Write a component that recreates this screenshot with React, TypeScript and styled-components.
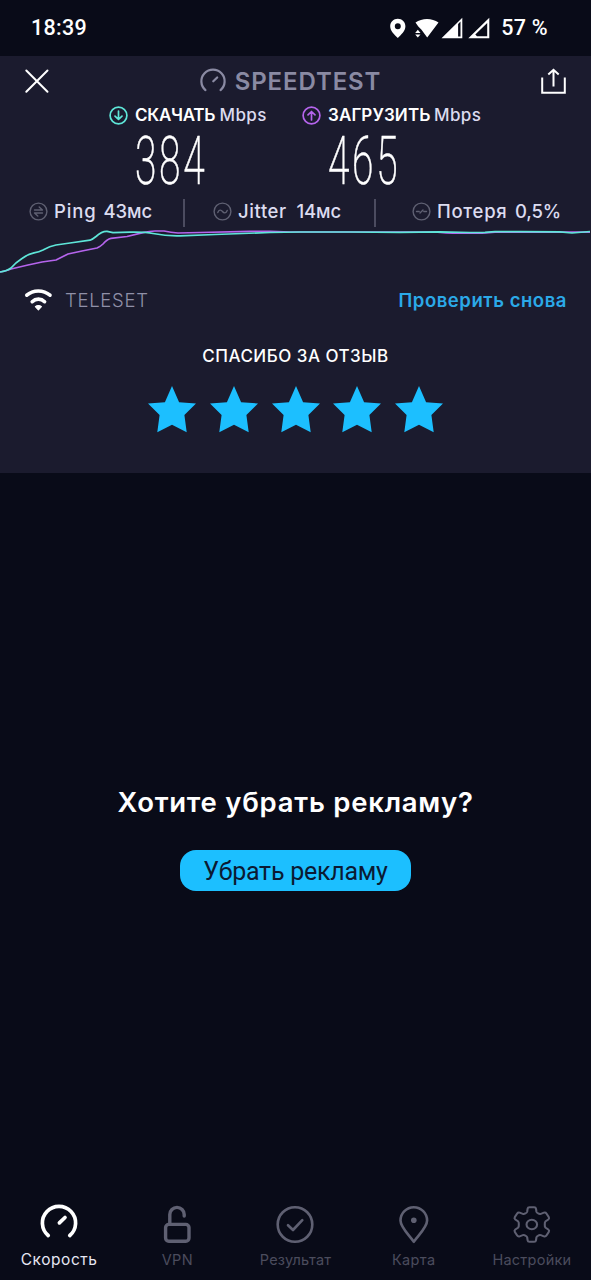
import React from 'react';
import styled, { createGlobalStyle } from 'styled-components';

const Global = createGlobalStyle`
  *, *::before, *::after { box-sizing: border-box; }
  body { margin: 0; background: #090b18; }
`;

const color = {
  page: '#090b18',
  panel: '#1b1b2e',
  white: '#ffffff',
  soft: '#dcdcf0',
  muted: '#8a8aa3',
  dim: '#5f6072',
  label: '#4b4c5d',
  accent: '#1cbfff',
  link: '#2ba9e8',
  download: '#5ee6d8',
  upload: '#b564ec',
};

const Screen = styled.div`
  display: flex;
  flex-direction: column;
  width: 100%;
  height: 1280px;
  background: ${color.page};
  font-family: Inter, 'Noto Sans', sans-serif;
  overflow: hidden;
`;

const Text = styled.span<{ $size: number; $weight?: number; $spacing?: number; $color?: string; $width?: number }>`
  flex: none;
  width: ${(p) => (p.$width ? `${p.$width}px` : 'auto')};
  font-size: ${(p) => p.$size}px;
  font-weight: ${(p) => p.$weight ?? 500};
  letter-spacing: ${(p) => p.$spacing ?? 0}px;
  color: ${(p) => p.$color ?? color.white};
  line-height: 1.2;
  white-space: nowrap;
`;

const StatusBar = styled.div`
  display: flex;
  flex: none;
  align-items: center;
  justify-content: space-between;
  height: 56px;
  padding: 0 43px 0 31px;
  font-family: Roboto, sans-serif;
`;

const StatusIcons = styled.div`
  display: flex;
  align-items: center;
`;

const StatusGlyphs = styled.svg`
  display: block;
  margin-right: 10px;
`;

const ResultPanel = styled.section`
  flex: none;
  height: 417px;
  background: ${color.panel};
`;

const Header = styled.header`
  display: grid;
  grid-template-columns: 150px 1fr 150px;
  align-items: center;
  height: 49px;
  padding: 0 24px;
`;

const Brand = styled.div`
  display: flex;
  align-items: center;
  justify-content: center;
  gap: 8px;
  padding: 3px 11px 0 0;
`;

const IconButton = styled.button<{ $end?: boolean }>`
  display: block;
  justify-self: ${(p) => (p.$end ? 'end' : 'start')};
  padding: 0;
  border: 0;
  background: none;
  line-height: 0;
`;

const Speeds = styled.div`
  display: grid;
  grid-template-columns: 193px 1fr;
  height: 91px;
  padding-left: 109px;
`;

const SpeedLabel = styled.div`
  display: flex;
  align-items: center;
  height: 20px;
  svg { flex: none; margin-right: 7px; }
`;

const SpeedValue = styled.div`
  height: 71px;
  padding-left: 26px;
  font: 200 66px/73px Roboto, sans-serif;
  letter-spacing: 4.5px;
  color: ${color.white};
  -webkit-text-stroke: 0.5px ${color.white};
  span { display: inline-block; transform: scaleX(0.59); transform-origin: left center; }
`;

const Stats = styled.div`
  display: grid;
  grid-template-columns: 184px 191px 1fr;
  height: 30px;
`;

const Stat = styled.div<{ $inset: number; $divided?: boolean }>`
  position: relative;
  display: flex;
  align-items: center;
  padding-left: ${(p) => p.$inset}px;
  svg { flex: none; margin-right: 6px; }
  &::before {
    content: '';
    display: ${(p) => (p.$divided ? 'block' : 'none')};
    position: absolute;
    left: -1px;
    top: 3px;
    width: 2px;
    height: 28px;
    background: #4c4c60;
  }
`;

const Chart = styled.svg`
  display: block;
  width: 100%;
  height: 54px;
`;

const ProviderRow = styled.div`
  display: flex;
  align-items: center;
  height: 41px;
  padding: 0 24px;
  svg { margin-right: 12px; }
`;

const Retry = styled.a`
  margin-left: auto;
  line-height: 0;
`;

const Feedback = styled.div`
  display: flex;
  flex-direction: column;
  align-items: center;
  padding-top: 25px;
`;

const Stars = styled.div`
  display: flex;
  gap: 13.6px;
  margin-top: 20px;
`;

const Promo = styled.main`
  display: flex;
  flex: 1;
  flex-direction: column;
  align-items: center;
  padding-top: 313px;
`;

const PromoButton = styled.button`
  width: 231px;
  height: 41px;
  margin-top: 31px;
  padding: 3px 0 0;
  border: 0;
  border-radius: 16px;
  background: ${color.accent};
  font: 400 25px/38px Roboto, sans-serif;
  letter-spacing: -0.25px;
  color: #0b1a33;
`;

const Nav = styled.nav`
  display: grid;
  flex: none;
  grid-template-columns: repeat(5, 1fr);
  height: 80px;
`;

const NavItem = styled.div`
  display: flex;
  flex-direction: column;
  align-items: center;
  padding-top: 4px;
  gap: 7px;
`;

const Gauge = ({ size, stroke, width }: { size: number; stroke: string; width: number }) => (
  <svg width={size} height={size} viewBox="0 0 40 40" fill="none" stroke={stroke} strokeWidth={width} strokeLinecap="round">
    <path d="M9.200 31.500A16.600 16.600 0 1 1 30.800 31.500" />
    <path d="M20.400 18.900L26 13.500" strokeWidth={width} />
  </svg>
);

const Badge = ({ stroke, children, dark }: { stroke: string; children: React.ReactNode; dark?: boolean }) => (
  <svg width="19" height="19" viewBox="0 0 19 19" fill="none" stroke={stroke} strokeWidth={dark ? 1.4 : 1.7} strokeLinecap="round" strokeLinejoin="round">
    <circle cx="9.5" cy="9.5" r="8.4" />
    {children}
  </svg>
);

const Star = () => (
  <svg width="48" height="47" viewBox="0 0 48 47" fill={color.accent}>
    <path d="M24 0L31.1 16.2L48 17.500L36.400 29L38.700 46.300L24 38.800L9.300 46.300L11.600 29L0 17.500L16.900 16.200Z" />
  </svg>
);

const navStroke = { fill: 'none', stroke: color.dim, strokeLinecap: 'round', strokeLinejoin: 'round' } as const;

const navItems: { name: string; spacing: number; icon: React.ReactNode }[] = [
  { name: 'Скорость', spacing: 0.9, icon: <Gauge size={40} stroke={color.white} width={3.7} /> },
  {
    name: 'VPN',
    spacing: 0.37,
    icon: (
      <svg width="40" height="40" viewBox="0 0 40 40" {...navStroke} strokeWidth="3.4">
        <rect x="8.600" y="20.400" width="23.400" height="16.800" rx="3.200" />
        <path d="M12.800 20V10.600A7.200 7.200 0 0 1 27.200 10.600V12" />
      </svg>
    ),
  },
  {
    name: 'Результат',
    spacing: 0.15,
    icon: (
      <svg width="40" height="40" viewBox="0 0 40 40" {...navStroke} strokeWidth="2.6">
        <circle cx="20" cy="20.500" r="17.300" />
        <path d="M13 21.200L18 26L27.300 16.200" />
      </svg>
    ),
  },
  {
    name: 'Карта',
    spacing: 0.37,
    icon: (
      <svg width="40" height="40" viewBox="0 0 40 40" {...navStroke} strokeWidth="2.6">
        <path d="M19.800 37.800C15 31 6.500 23.500 6.500 16.600A13.300 13.300 0 0 1 33.100 16.600C33.100 23.500 24.600 31 19.800 37.800Z" />
        <circle cx="19.800" cy="16.200" r="2.800" fill={color.dim} stroke="none" />
      </svg>
    ),
  },
  {
    name: 'Настройки',
    spacing: 0.25,
    icon: (
      <svg width="40" height="40" viewBox="0 0 40 40" {...navStroke} strokeWidth="1.900">
        <g transform="translate(-2.200 0) scale(1.100 1)">
          <path d="M16.2 4.6Q16.4 3.2 17.9 3.2H22.1Q23.6 3.2 23.8 4.6L24.2 7.7Q24.6 8.9 25.8 9.4Q27 10.2 28.2 9.8L31 8.7Q32.5 8.2 33.3 9.5L35.4 13Q36.2 14.4 35 15.4L32.6 17.2Q31.6 18.2 31.8 20.5Q31.6 22.8 32.6 23.8L35 25.6Q36.2 26.6 35.4 28L33.3 31.5Q32.5 32.8 31 32.3L28.2 31.2Q27 30.8 25.8 31.6Q24.6 32.1 24.2 33.3L23.8 36.4Q23.6 37.8 22.1 37.8H17.9Q16.4 37.8 16.2 36.4L15.8 33.3Q15.4 32.1 14.2 31.6Q13 30.8 11.8 31.2L9 32.3Q7.5 32.8 6.7 31.5L4.6 28Q3.8 26.6 5 25.6L7.4 23.8Q8.4 22.8 8.2 20.5Q8.4 18.2 7.4 17.2L5 15.4Q3.8 14.4 4.6 13L6.7 9.5Q7.5 8.2 9 8.7L11.8 9.8Q13 10.2 14.2 9.4Q15.4 8.9 15.8 7.7Z" />
          <circle cx="20" cy="20.500" r="4.800" />
        </g>
      </svg>
    ),
  },
];

export default function App() {
  return (
    <Screen>
      <Global />
      <StatusBar>
        <Text $size={21.5} $spacing={0.3}>18:39</Text>
        <StatusIcons>
          <StatusGlyphs width="102" height="24" viewBox="389.500 16 102 24" fill="#fff">
            <path fillRule="evenodd" d="M398.300 18.800C394 18.800 390.700 22.100 390.700 26.200C390.700 31 395 34.500 398.300 38C401.600 34.500 405.900 31 405.900 26.200C405.900 22.100 402.600 18.800 398.300 18.800ZM398.300 29.200A3 3 0 1 1 398.300 23.200A3 3 0 0 1 398.300 29.200Z" />
            <path d="M416 22.500C422.500 17.700 432.500 17.700 439 22.500L427.700 37.600L422 29.800L418.800 26.600Z" />
            <path d="M418.300 29.800L421 33H415.700ZM418.300 37.600L421 34.600H415.700Z" />
            <path fillRule="evenodd" d="M442 38.300L462.800 17.800V38.300ZM458.600 24V36.500H461V21.600Z" />
            <path fillRule="evenodd" d="M468.800 38.300L489.800 17.800V38.300ZM477.500 36.300H487.700V23L475.800 34.600Z" />
          </StatusGlyphs>
          <Text $size={21.5} $spacing={0.3}>57 %</Text>
        </StatusIcons>
      </StatusBar>

      <ResultPanel>
        <Header>
          <IconButton aria-label="Закрыть">
            <svg width="26" height="26" viewBox="0 0 26 26" stroke="#fff" strokeWidth="2" strokeLinecap="round">
              <path d="M2.300 2.500L23.500 23.800M23.500 2.500L2.300 23.800" />
            </svg>
          </IconButton>
          <Brand>
            <Gauge size={28} stroke={color.muted} width={3.2} />
            <Text $size={24} $weight={600} $spacing={0.9} $color={color.muted}>SPEEDTEST</Text>
          </Brand>
          <IconButton $end aria-label="Поделиться">
            <svg width="26" height="26" viewBox="0 0 26 26" fill="none" stroke="#fff" strokeWidth="2">
              <path d="M1.200 9.500V24.800H23.800V9.500M12.500 18.500V2.500M7.300 6.500L12.500 1.800L17.700 6.500" />
            </svg>
          </IconButton>
        </Header>

        <Speeds>
          <div>
            <SpeedLabel>
              <Badge stroke={color.download}><path d="M9.500 5V13.300M6 10.200L9.500 13.500L13 10.200" /></Badge>
              <Text $size={17} $weight={600} $spacing={-0.3} $width={84.5}>СКАЧАТЬ</Text>
              <Text $size={17} $spacing={0.4} $color={color.soft}>Mbps</Text>
            </SpeedLabel>
            <SpeedValue><span>384</span></SpeedValue>
          </div>
          <div>
            <SpeedLabel>
              <Badge stroke={color.upload}><path d="M9.500 14V5.700M6 8.800L9.500 5.500L13 8.800" /></Badge>
              <Text $size={17} $weight={600} $spacing={0.1} $width={106}>ЗАГРУЗИТЬ</Text>
              <Text $size={17} $spacing={0.4} $color={color.soft}>Mbps</Text>
            </SpeedLabel>
            <SpeedValue><span>465</span></SpeedValue>
          </div>
        </Speeds>

        <Stats>
          <Stat $inset={29}>
            <Badge stroke={color.dim} dark><path d="M5.500 8H13.500L10.200 5M13.500 11H5.500L8.800 14" /></Badge>
            <Text $size={18.5} $spacing={0.9} $color={color.soft} $width={49.500}>Ping</Text>
            <Text $size={18.5} $spacing={-0.1} $color={color.soft}>43мс</Text>
          </Stat>
          <Stat $inset={29} $divided>
            <Badge stroke={color.dim} dark><path d="M4.800 10.500C6 7.500 8 7.500 9.500 9.500S13 11.500 14.200 8.500" /></Badge>
            <Text $size={18.5} $spacing={0.6} $color={color.soft} $width={58.500}>Jitter</Text>
            <Text $size={18.5} $spacing={-0.1} $color={color.soft}>14мс</Text>
          </Stat>
          <Stat $inset={37} $divided>
            <Badge stroke={color.dim} dark><path d="M4.500 9.500H7.200M11.800 9.500H14.500M8 11L11 8" /></Badge>
            <Text $size={18.5} $spacing={0.7} $color={color.soft} $width={78}>Потеря</Text>
            <Text $size={18.5} $spacing={-0.2} $color={color.soft}>0,5%</Text>
          </Stat>
        </Stats>

        <Chart viewBox="0 226 591 54" preserveAspectRatio="none" fill="none" strokeWidth="1.700" strokeLinejoin="round">
          <path stroke={color.upload} d="M0 272Q6 271 11 269L28 265L42 262L56 260Q62 257 68 254L82 251L97 248Q101 246 103 244Q107 239 111 238.300L127 236.500L143 232.700Q150 231 155 231H164Q171 232.500 178 233L200 232.500L250 231.300H270L290 232H435Q445 233.200 460 233.200H482L495 232.200H590" />
          <path stroke={color.download} d="M0 272Q7 271 11 268Q15 263 22 258.500Q28 254 34 252.800Q39 252 43 250Q50 246 56 245L70 243L90 240.200Q93 239 96 236.500Q102 231 107 231.300L113 232.600L130 232.200Q146 232 153 233.500Q167 236.200 180 235.800L215 234.500L270 232.500L300 232H350L400 232.400L440 231.800L470 232.500L485 232.300L495 231.700H520L560 231.900L572 233L590 231.500" />
        </Chart>

        <ProviderRow>
          <svg width="29" height="23" viewBox="0 0 29 23" fill="none" stroke="#fff" strokeWidth="3.600" strokeLinecap="round">
            <path d="M2.800 6.200C9 0.500 19.500 0.500 26 6.200M8.200 12.700C11.700 9.200 17.100 9.200 20.600 12.700" />
            <path d="M11.400 17.700C13 16.200 15.800 16.200 17.400 17.700L14.400 20.900Z" fill="#fff" strokeWidth="1.200" strokeLinejoin="round" />
          </svg>
          <Text $size={18.5} $weight={300} $spacing={0.7} $color="#9090a8">TELESET</Text>
          <Retry><Text $size={18.5} $weight={600} $spacing={0.55} $color={color.link}>Проверить снова</Text></Retry>
        </ProviderRow>

        <Feedback>
          <Text $size={17} $spacing={0.5}>СПАСИБО ЗА ОТЗЫВ</Text>
          <Stars>{[1, 2, 3, 4, 5].map((n) => <Star key={n} />)}</Stars>
        </Feedback>
      </ResultPanel>

      <Promo>
        <Text $size={27.5} $weight={600} $spacing={0.75}>Хотите убрать рекламу?</Text>
        <PromoButton>Убрать рекламу</PromoButton>
      </Promo>

      <Nav>
        {navItems.map((item, i) => (
          <NavItem key={item.name}>
            {item.icon}
            <Text $size={i === 0 ? 15.5 : 14.5} $weight={400} $spacing={i === 0 ? 0.55 : item.spacing} $color={i === 0 ? '#e6e6f2' : color.label}>
              {item.name}
            </Text>
          </NavItem>
        ))}
      </Nav>
    </Screen>
  );
}
